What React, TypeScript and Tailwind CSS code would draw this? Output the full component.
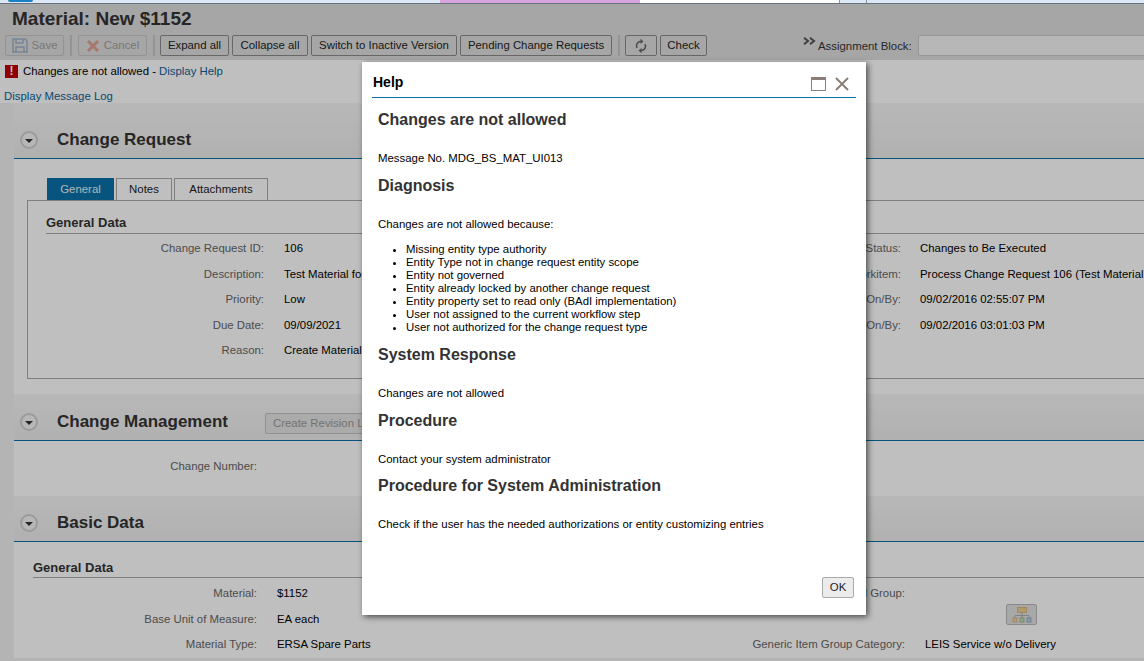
import React from 'react';

type Row = { label: string; value?: string; sideLabel?: string; sideValue?: string };

const changeRequestRows: Row[] = [
  { label: 'Change Request ID:', value: '106', sideLabel: 'Change Request Status:', sideValue: 'Changes to Be Executed' },
  { label: 'Description:', value: 'Test Material for Change Request', sideLabel: 'Current Workitem:', sideValue: 'Process Change Request 106 (Test Material' },
  { label: 'Priority:', value: 'Low', sideLabel: 'Created On/By:', sideValue: '09/02/2016 02:55:07 PM' },
  { label: 'Due Date:', value: '09/09/2021', sideLabel: 'Changed On/By:', sideValue: '09/02/2016 03:01:03 PM' },
  { label: 'Reason:', value: 'Create Material' },
];

const basicDataRows: Row[] = [
  { label: 'Material:', value: '$1152', sideLabel: 'Material Group:' },
  { label: 'Base Unit of Measure:', value: 'EA each' },
  { label: 'Material Type:', value: 'ERSA Spare Parts', sideLabel: 'Generic Item Group Category:', sideValue: 'LEIS Service w/o Delivery' },
];

const reasons = [
  'Missing entity type authority',
  'Entity Type not in change request entity scope',
  'Entity not governed',
  'Entity already locked by another change request',
  'Entity property set to read only (BAdI implementation)',
  'User not assigned to the current workflow step',
  'User not authorized for the change request type',
];

const ToolButton = ({ children, disabled, w }: { children: React.ReactNode; disabled?: boolean; w: string }) => (
  <div
    className={`h-[21px] ${w} flex shrink-0 items-center justify-center gap-1 whitespace-nowrap rounded-[2px] border bg-[#dedede] text-[11.4px] ${
      disabled ? 'border-[#c4c4c4] text-[#a0a0a0]' : 'border-[#8a8a8a] text-[#222]'
    }`}
  >
    {children}
  </div>
);

const Separator = ({ className = 'mx-[3px]' }: { className?: string }) => <div className={`${className} h-[21px] w-[2px] shrink-0 bg-[#c6c6c6]`} />;

const SectionHeader = ({ title, h, children }: { title: string; h: string; children?: React.ReactNode }) => (
  <div className={`${h} flex items-end border-b border-[#0a70a8] bg-gradient-to-b from-[#f6f6f6] to-[#ececec] pb-[7px] pl-[6px]`}>
    <div className="mb-[2px] flex h-[18px] w-[18px] items-center justify-center rounded-full border-2 border-[#cfcfcf] bg-[#f4f4f4]">
      <div className="mt-[2px] h-0 w-0 border-x-[4px] border-t-[4px] border-x-transparent border-t-[#333]" />
    </div>
    <div className="-mb-[1px] ml-[19px] text-[17px] leading-[24px] font-bold text-[#333]">{title}</div>
    {children}
  </div>
);

const FieldRows = ({ rows, labelW, valueW, sideW, sidePad }: { rows: Row[]; labelW: string; valueW: string; sideW: string; sidePad: string }) => (
  <div className="flex flex-col">
    {rows.map((row) => (
      <div key={row.label} className="flex h-[25.5px] items-center whitespace-nowrap text-[11.4px]">
        <div className={`${labelW} shrink-0 text-right text-[#666]`}>{row.label}</div>
        <div className={`${valueW} shrink-0 overflow-hidden pl-[20px] text-black`}>{row.value}</div>
        <div className={`${sideW} shrink-0 text-right text-[#666]`}>{row.sideLabel}</div>
        <div className={`${sidePad} text-black`}>{row.sideValue}</div>
      </div>
    ))}
  </div>
);

const HelpHeading = ({ children, className }: { children: React.ReactNode; className: string }) => (
  <h2 className={`ml-[6px] text-[16px] leading-[20px] font-bold text-[#333] ${className}`}>{children}</h2>
);

const HelpText = ({ children, className }: { children: React.ReactNode; className: string }) => (
  <p className={`ml-[6px] text-[11.4px] leading-[13px] text-black ${className}`}>{children}</p>
);

const HelpDialog = () => (
  <div className="absolute left-[362px] top-[62px] flex h-[553px] w-[504px] flex-col bg-white px-[10px] shadow-[2px_2px_6px_rgba(0,0,0,0.6)]">
    <div className="flex h-[36px] items-end justify-between border-b border-[#0a70a8] pb-[6px]">
      <div className="ml-[1px] text-[14px] leading-[18px] font-bold text-black">Help</div>
      <div className="mr-[7px] flex items-center gap-[9px]">
        <div className="h-[14px] w-[15px] border border-[#8a7f78] border-t-[3px]" />
        <svg width="14" height="14" viewBox="0 0 14 14" fill="none" stroke="#8a7f78" strokeWidth="2">
          <path d="M1 1 L13 13 M13 1 L1 13" />
        </svg>
      </div>
    </div>
    <HelpHeading className="mt-[12px]">Changes are not allowed</HelpHeading>
    <HelpText className="mt-[22px]">Message No. MDG_BS_MAT_UI013</HelpText>
    <HelpHeading className="mt-[11px]">Diagnosis</HelpHeading>
    <HelpText className="mt-[22px]">Changes are not allowed because:</HelpText>
    <ul className="ml-[34px] mt-[12px] list-disc text-[11.4px] leading-[13px] text-black">
      {reasons.map((reason) => (
        <li key={reason}>{reason}</li>
      ))}
    </ul>
    <HelpHeading className="mt-[11px]">System Response</HelpHeading>
    <HelpText className="mt-[22px]">Changes are not allowed</HelpText>
    <HelpHeading className="mt-[11px]">Procedure</HelpHeading>
    <HelpText className="mt-[22px]">Contact your system administrator</HelpText>
    <HelpHeading className="mt-[10px]">Procedure for System Administration</HelpHeading>
    <HelpText className="mt-[22px]">Check if the user has the needed authorizations or entity customizing entries</HelpText>
    <div className="mb-[17px] mr-[2px] mt-auto flex justify-end">
      <div className="flex h-[21px] w-[32px] items-center justify-center rounded-[2px] border border-[#aaa] bg-[#ececec] text-[11.4px] text-[#222]">OK</div>
    </div>
  </div>
);

export default function App() {
  return (
    <div className="relative h-[661px] w-[1144px] overflow-hidden bg-white font-['Liberation_Sans',Arial,sans-serif]">
      {/* top tab strip, not covered by the backdrop */}
      <div className="relative z-10 flex h-[3px] bg-[#dbe8f3]">
        <div className="ml-[8px] h-[2px] w-[25px] rounded-b-[3px] bg-[#1b7fc4]" />
        <div className="ml-[407px] h-[3px] w-[200px] bg-[#d9a3df]" />
        <div className="h-[3px] w-[200px] border-r border-[#8898a8] bg-white" />
        <div className="h-[3px] w-[27px] border-r border-[#8898a8]" />
      </div>

      <div className="h-[57px] border-t border-[#8898a8] bg-[#dedede] pl-[12px]">
        <h1 className="pt-[4px] text-[19px] leading-[22px] font-bold text-[#333]">Material: New $1152</h1>
        <div className="-ml-[7px] mt-[5px] flex items-center gap-[3px]">
          <ToolButton disabled w="w-[59px]">
            <svg width="16" height="15" viewBox="0 0 16 15" fill="none" stroke="#9db4c8" strokeWidth="1.5">
              <path d="M1 1 H13 L15 3 V14 H1 Z M4 1 V5 H11 V1 M4 14 V9 H12 V14" />
            </svg>
            Save
          </ToolButton>
          <Separator />
          <ToolButton disabled w="w-[69px]">
            <svg width="14" height="14" viewBox="0 0 14 14" fill="none" stroke="#e0a090" strokeWidth="3">
              <path d="M2 2 L12 12 M12 2 L2 12" />
            </svg>
            Cancel
          </ToolButton>
          <Separator className="ml-[3px] mr-[2px]" />
          <ToolButton w="w-[69px]">Expand all</ToolButton>
          <ToolButton w="w-[76px]">Collapse all</ToolButton>
          <ToolButton w="w-[146px]">Switch to Inactive Version</ToolButton>
          <ToolButton w="w-[152px]">Pending Change Requests</ToolButton>
          <Separator className="ml-[3px] mr-[2px]" />
          <ToolButton w="w-[32px]">
            {/* refresh: two arcs with arrowheads */}
            <svg width="12" height="16" viewBox="0 0 12 16" fill="none" stroke="#666" strokeWidth="1.6">
              <path d="M2 10 A4.5 4.5 0 0 1 5 3.5 H6" />
              <path d="M10 6 A4.5 4.5 0 0 1 7 12.5 H6" />
              <path d="M5.5 0.8 L8.5 3.5 L5.5 6 Z" fill="#666" stroke="none" />
              <path d="M6.5 10 L3.5 12.5 L6.5 15.2 Z" fill="#666" stroke="none" />
            </svg>
          </ToolButton>
          <ToolButton w="w-[47px]">Check</ToolButton>
          <div className="ml-[93px] flex shrink-0 items-center whitespace-nowrap">
            <svg className="-mt-[9px]" width="13" height="8" viewBox="0 0 13 8" fill="none" stroke="#555" strokeWidth="2">
              <path d="M1 0.8 L5 4 L1 7.2 M7 0.8 L11 4 L7 7.2" />
            </svg>
            <span className="ml-[2px] mt-[2px] text-[11.4px] text-[#333]">Assignment Block:</span>
            <div className="ml-[6px] h-[21px] w-[230px] rounded-[2px] border border-[#c8c8c8] bg-[#f4f4f4]" />
          </div>
        </div>
      </div>

      {/* messages */}
      <div className="h-[43px] bg-white text-[11.4px]">
        <div className="flex items-center pl-[5px] pt-[3px]">
          <div className="flex h-[13px] w-[13px] items-center justify-center bg-[#c00000] text-[12px] font-bold leading-[13px] text-white">!</div>
          <span className="ml-[5px] text-black">Changes are not allowed - </span>
          <span className="ml-[3px] text-[#0a5f96]">Display Help</span>
        </div>
        <div className="pl-[4px] pt-[8px] text-[#0a5f96]">Display Message Log</div>
      </div>

      <div className="h-[558px] bg-[#f0f0f0] pl-[14px]">
        <div className="bg-white">
          <SectionHeader title="Change Request" h="h-[56px]" />
          <div className="h-[235px] pl-[13px] pt-[19px]">
            <div className="ml-[20px] flex h-[22px] gap-[2px] text-[11.4px]">
              <div className="flex w-[67px] items-center justify-center bg-[#0a70a8] pt-[1px] text-[#e8f0f5]">General</div>
              <div className="flex w-[56px] items-center justify-center border border-b-0 border-[#aaa] text-[#222]">Notes</div>
              <div className="flex w-[94px] items-center justify-center border border-b-0 border-[#aaa] text-[#222]">Attachments</div>
            </div>
            <div className="h-[179px] border border-r-0 border-[#aaa] pl-[18px] pt-[13px]">
              <div className="h-[20px] border-b border-[#aaa] text-[13px] leading-[18px] font-bold text-[#333]">General Data</div>
              <div className="-ml-[18px] pt-[2px]">
                <FieldRows rows={changeRequestRows} labelW="w-[236px]" valueW="w-[450px]" sideW="w-[187px]" sidePad="pl-[19px]" />
              </div>
            </div>
          </div>

          <SectionHeader title="Change Management" h="h-[47px]">
            <div className="mb-[-1px] ml-[37px] flex h-[21px] w-[150px] items-center rounded-[2px] border border-[#c0c0c0] bg-[#e4e4e4] pl-[7px] text-[11.4px] text-[#999]">Create Revision Link</div>
          </SectionHeader>
          <div className="h-[55px] pl-[13px] pt-[16px] text-[11.4px] text-[#666]">
            <div className="w-[230px] text-right leading-[18px]">Change Number:</div>
          </div>

          <SectionHeader title="Basic Data" h="h-[46px]" />
          <div className="relative pl-[19px] pt-[17px]">
            <div className="h-[19px] border-b border-[#aaa] text-[13px] leading-[17px] font-bold text-[#333]">General Data</div>
            <div className="-ml-[19px] pt-[3px]">
              <FieldRows rows={basicDataRows} labelW="w-[243px]" valueW="w-[450px]" sideW="w-[198px]" sidePad="pl-[20px]" />
            </div>
            {/* hierarchy value help button */}
            <div className="absolute left-[992px] top-[62px] flex h-[21px] w-[31px] items-center justify-center rounded-[2px] border border-[#b8b8b8] bg-[#e0e0e0]">
              <svg className="opacity-70" width="20" height="16" viewBox="0 0 20 16" fill="none" strokeWidth="1">
                <rect x="5.5" y="0.5" width="9" height="5" fill="#f0c878" stroke="#d8a850" />
                <path d="M10 5.5 V8.5 M3 11 V8.5 H17 V11 M10 8.5 V11" stroke="#9a9a9a" />
                <rect x="1" y="11" width="4" height="4" fill="#f0c890" stroke="#d8a060" />
                <rect x="8" y="11" width="4" height="4" fill="#b8d8a0" stroke="#88a870" />
                <rect x="15" y="11" width="4" height="4" fill="#a8c8e0" stroke="#7098b8" />
              </svg>
            </div>
          </div>
        </div>
      </div>

      {/* dialog backdrop */}
      <div className="absolute inset-x-0 bottom-0 top-[3px] bg-black/25" />
      <HelpDialog />
    </div>
  );
}
